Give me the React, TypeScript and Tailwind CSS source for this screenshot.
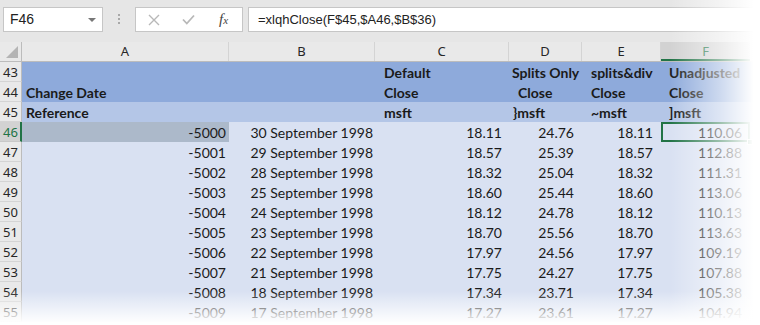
import React from "react";

const rows = [
  { n: 46, a: "-5000", b: "30 September 1998", c: "18.11", d: "24.76", e: "18.11", f: "110.06" },
  { n: 47, a: "-5001", b: "29 September 1998", c: "18.57", d: "25.39", e: "18.57", f: "112.88" },
  { n: 48, a: "-5002", b: "28 September 1998", c: "18.32", d: "25.04", e: "18.32", f: "111.31" },
  { n: 49, a: "-5003", b: "25 September 1998", c: "18.60", d: "25.44", e: "18.60", f: "113.06" },
  { n: 50, a: "-5004", b: "24 September 1998", c: "18.12", d: "24.78", e: "18.12", f: "110.13" },
  { n: 51, a: "-5005", b: "23 September 1998", c: "18.70", d: "25.56", e: "18.70", f: "113.63" },
  { n: 52, a: "-5006", b: "22 September 1998", c: "17.97", d: "24.56", e: "17.97", f: "109.19" },
  { n: 53, a: "-5007", b: "21 September 1998", c: "17.75", d: "24.27", e: "17.75", f: "107.88" },
  { n: 54, a: "-5008", b: "18 September 1998", c: "17.34", d: "23.71", e: "17.34", f: "105.38" },
  { n: 55, a: "-5009", b: "17 September 1998", c: "17.27", d: "23.61", e: "17.27", f: "104.94" },
];

function RowHead({ n, selected }: { n: number; selected?: boolean }) {
  return (
    <div
      className={
        selected
          ? "w-[22px] h-[20px] shrink-0 bg-[#d2d2d2] border-r-2 border-[#217346] border-b border-b-[#c8c8c8] text-[#217346] pl-[3px] leading-[20px] font-['Noto_Sans',sans-serif] text-[13px] font-normal"
          : "w-[22px] h-[20px] shrink-0 bg-[#e9e9e9] border-r border-[#bcbcbc] border-b border-b-[#d4d4d4] text-[#262626] pl-[3px] leading-[20px] font-['Noto_Sans',sans-serif] text-[13px] font-normal"
      }
    >
      {n}
    </div>
  );
}

function Spacer() {
  return <div className="flex-1" />;
}

export default function App() {
  return (
    <div className="relative w-[760px] h-[325px] overflow-hidden bg-white">
      {/* formula bar */}
      <div className="flex h-[42px] items-start bg-[#e6e6e6] pt-[7px] pl-[3px] font-['Liberation_Sans',sans-serif]">
        <div className="flex h-[25px] w-[100px] items-center justify-between border border-[#c6c6c6] bg-white pl-[6px] pr-[6px] text-[14px] text-[#222]">
          <span>F46</span>
          <span className="block h-0 w-0 border-x-[4px] border-t-[4px] border-x-transparent border-t-[#777]" />
        </div>
        <div className="flex w-[32px] flex-col items-center gap-[2px] pt-[7px]">
          <span className="h-[2px] w-[2px] bg-[#a8a8a8]" />
          <span className="h-[2px] w-[2px] bg-[#a8a8a8]" />
          <span className="h-[2px] w-[2px] bg-[#a8a8a8]" />
        </div>
        <div className="flex h-[25px] w-[108px] items-center border border-[#c6c6c6] bg-white">
          <svg className="ml-[12px]" width="12" height="12" viewBox="0 0 12 12">
            <path d="M1 1L11 11M11 1L1 11" stroke="#b8b8b8" strokeWidth="1.4" fill="none" />
          </svg>
          <svg className="ml-[22px]" width="13" height="11" viewBox="0 0 13 11">
            <path d="M1 5.5L4.8 9.5L12 1.5" stroke="#b8b8b8" strokeWidth="1.8" fill="none" />
          </svg>
          <span className="ml-[24px] font-['Liberation_Serif',serif] text-[15px] italic text-[#444]">
            f<span className="text-[11px]">x</span>
          </span>
        </div>
        <div className="ml-[5px] flex h-[25px] flex-1 items-center border border-[#c6c6c6] border-r-0 bg-white pl-[9px] text-[13px] text-[#222]">
          =xlqhClose(F$45,$A46,$B$36)
        </div>
      </div>

      {/* column headers */}
      <div className="flex h-[20px] border-b border-[#bcbcbc] bg-[#e9e9e9] font-['Noto_Sans',sans-serif] text-[13px] leading-[19px] text-[#262626]">
        <div className="relative w-[22px] shrink-0 border-r border-[#bcbcbc]">
          <span className="absolute bottom-[3px] right-[3px] h-0 w-0 border-b-[12px] border-l-[12px] border-b-[#b4b4b4] border-l-transparent" />
        </div>
        <div className="w-[207px] shrink-0 border-r border-[#d4d4d4] text-center">A</div>
        <div className="w-[146px] shrink-0 border-r border-[#d4d4d4] text-center">B</div>
        <div className="w-[134px] shrink-0 border-r border-[#d4d4d4] text-center">C</div>
        <div className="w-[73px] shrink-0 border-r border-[#d4d4d4] text-center">D</div>
        <div className="w-[79px] shrink-0 border-r border-[#d4d4d4] text-center">E</div>
        <div className="w-[89px] shrink-0 border-b-2 border-[#217346] bg-[#d2d2d2] text-center text-[#217346]">F</div>
        <Spacer />
      </div>

      {/* header rows */}
      <div className="font-['Lato',sans-serif] text-[14px] font-bold text-[#1a1a1a]">
        <div className="flex h-[20px] bg-[#8eaadb] leading-[21px]">
          <RowHead n={43} />
          <div className="w-[207px] shrink-0" />
          <div className="w-[146px] shrink-0" />
          <div className="w-[134px] shrink-0 pl-[9px]">Default</div>
          <div className="w-[73px] shrink-0 whitespace-nowrap pl-[3px]">Splits Only</div>
          <div className="w-[79px] shrink-0 pl-[9px]">splits&amp;div</div>
          <div className="w-[89px] shrink-0 pl-[8px]">Unadjusted</div>
          <Spacer />
        </div>
        <div className="flex h-[20px] bg-[#8eaadb] leading-[21px]">
          <RowHead n={44} />
          <div className="w-[207px] shrink-0 pl-[4px]">Change Date</div>
          <div className="w-[146px] shrink-0" />
          <div className="w-[134px] shrink-0 pl-[9px]">Close</div>
          <div className="w-[73px] shrink-0 pl-[9px]">Close</div>
          <div className="w-[79px] shrink-0 pl-[9px]">Close</div>
          <div className="w-[89px] shrink-0 pl-[8px]">Close</div>
          <Spacer />
        </div>
        <div className="flex h-[20px] bg-[#b4c6e7] leading-[21px]">
          <RowHead n={45} />
          <div className="w-[207px] shrink-0 pl-[4px]">Reference</div>
          <div className="w-[146px] shrink-0" />
          <div className="w-[134px] shrink-0 pl-[9px]">msft</div>
          <div className="w-[73px] shrink-0 pl-[4px]">{"}msft"}</div>
          <div className="w-[79px] shrink-0 pl-[9px]">~msft</div>
          <div className="w-[89px] shrink-0 pl-[8px]">]msft</div>
          <Spacer />
        </div>
      </div>

      {/* data rows */}
      <div className="font-['Lato',sans-serif] text-[14px] text-[#1a1a1a]">
        {rows.map((r, i) => (
          <div key={r.n} className="flex h-[20px] bg-[#d9e1f2] leading-[21px]">
            <RowHead n={r.n} selected={i === 0} />
            <div className={i === 0 ? "w-[207px] shrink-0 bg-[#acb9ca] pr-[3px] text-right" : "w-[207px] shrink-0 pr-[3px] text-right"}>{r.a}</div>
            <div className="w-[146px] shrink-0 pr-[2px] text-right">{r.b}</div>
            <div className="w-[134px] shrink-0 pr-[7px] text-right">{r.c}</div>
            <div className="w-[73px] shrink-0 pr-[8px] text-right">{r.d}</div>
            <div className="w-[79px] shrink-0 pr-[8px] text-right">{r.e}</div>
            <div className="relative w-[89px] shrink-0 pr-[8px] text-right">
              {r.f}
              {i === 0 && (
                <>
                  <span className="absolute inset-0 border-2 border-[#217346]" />
                  <span className="absolute -bottom-[3px] -right-[3px] h-[6px] w-[6px] border border-white bg-[#217346]" />
                </>
              )}
            </div>
            <Spacer />
          </div>
        ))}
      </div>

      {/* screenshot fades */}
      <div className="pointer-events-none absolute inset-y-0 right-0 w-[90px] bg-[linear-gradient(to_right,rgba(255,255,255,0),rgba(255,255,255,0.55)_55%,#fff_93%)]" />
      <div className="pointer-events-none absolute inset-x-0 bottom-0 h-[34px] bg-[linear-gradient(to_bottom,rgba(255,255,255,0),#fff_95%)]" />
    </div>
  );
}
